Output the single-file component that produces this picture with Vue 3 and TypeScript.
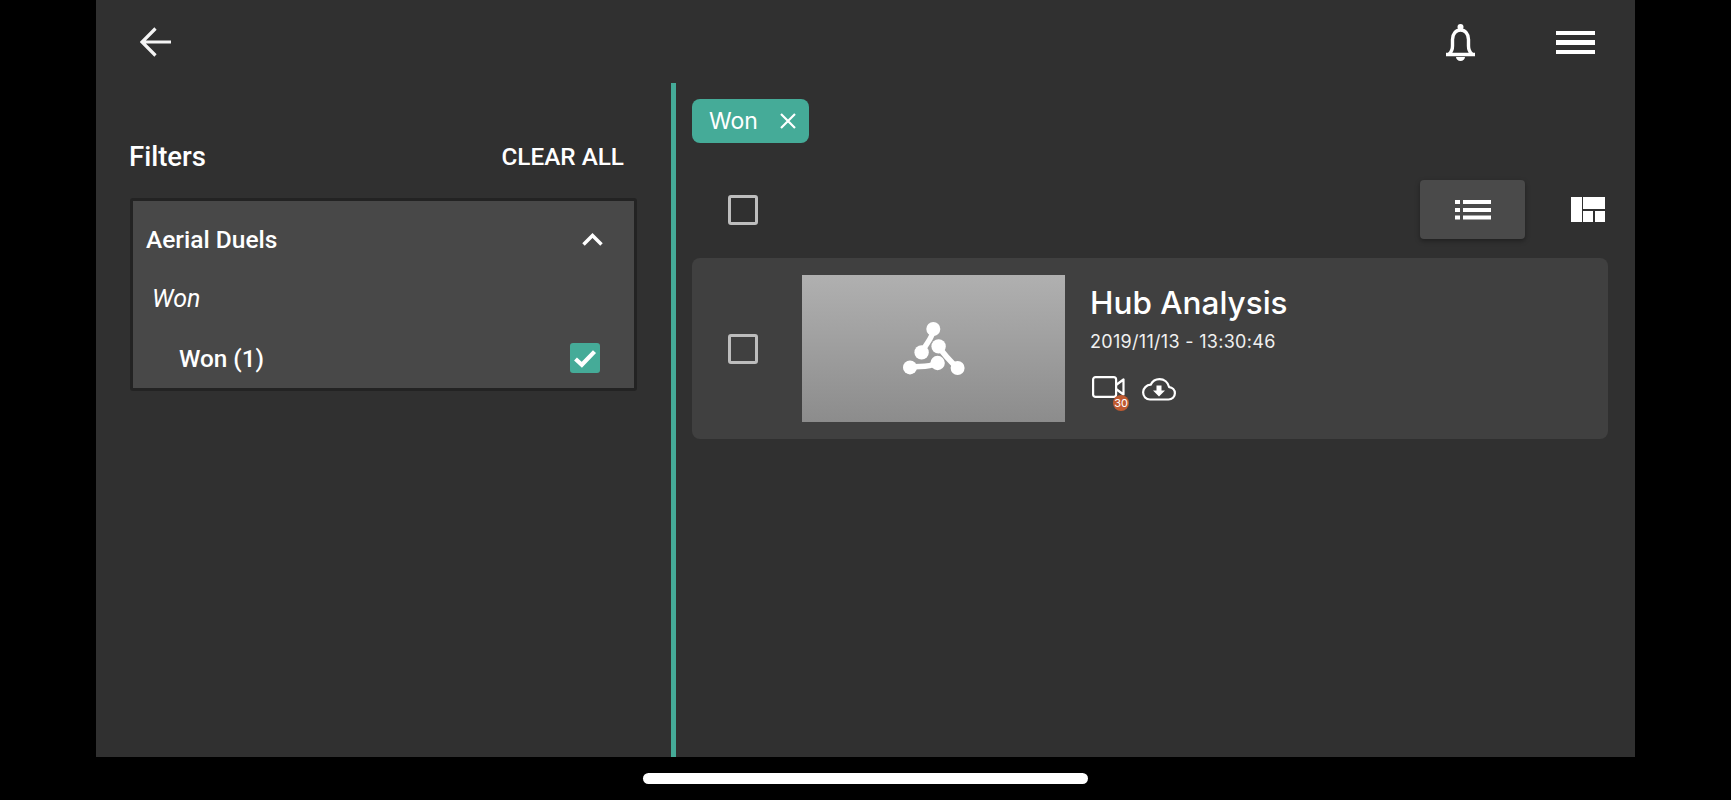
<script setup lang="ts">
import { ref } from 'vue'

interface ClipItem {
  title: string
  date: string
  clips: number
}

const filterTag = ref('Won')
const items = ref<ClipItem[]>([
  { title: 'Hub Analysis', date: '2019/11/13 - 13:30:46', clips: 30 }
])
</script>

<template>
  <div class="screen">
    <div class="panel">
      <header class="topbar">
        <svg class="back" width="31" height="30" viewBox="0 0 31 30" fill="none" stroke="#f4f4f4" stroke-width="3.200">
          <path d="M31 15H2M15.500 1.500 2 15l13.500 13.500" />
        </svg>
        <div class="topbar-right">
          <svg width="31" height="37" viewBox="0 0 31 37" fill="none" stroke="#fff" stroke-width="3.400">
            <path d="M1 30.500h29M4 30c2.500-2 3.500-4 3.500-8v-6.500c0-5.500 3.500-9.500 8-9.500s8 4 8 9.500V22c0 4 1 6 3.500 8" stroke-linejoin="round" />
            <circle cx="15.500" cy="3" r="3" fill="#fff" stroke="none" />
            <path d="M11 33h9c0 2.300-2 4-4.500 4S11 35.300 11 33z" fill="#fff" stroke="none" />
          </svg>
          <div class="burger"><span></span><span></span><span></span></div>
        </div>
      </header>

      <div class="content">
        <aside class="sidebar">
          <div class="filters-head">
            <span class="filters-title">Filters</span>
            <span class="clear">CLEAR ALL</span>
          </div>
          <section class="filter-box">
            <div class="box-row box-head">
              <span>Aerial Duels</span>
              <svg width="21" height="13" viewBox="0 0 21 13" fill="none" stroke="#fff" stroke-width="3.500">
                <path d="M1.500 11.500 10.500 2.500l9 9" />
              </svg>
            </div>
            <div class="box-group">Won</div>
            <div class="box-row box-option">
              <span>Won (1)</span>
              <span class="checked">
                <svg width="24" height="19" viewBox="0 0 22 18" fill="none" stroke="#fff" stroke-width="4">
                  <path d="M2 9.500 8 15 20 2.500" />
                </svg>
              </span>
            </div>
          </section>
        </aside>

        <main class="main">
          <div class="chip">
            <span>{{ filterTag }}</span>
            <svg width="16" height="16" viewBox="0 0 16 16" stroke="#fff" stroke-width="2.200">
              <path d="M1 1l14 14M15 1 1 15" />
            </svg>
          </div>

          <div class="toolbar">
            <span class="checkbox"></span>
            <div class="views">
              <button class="view-btn">
                <svg width="36" height="21" viewBox="0 0 36 21" fill="#fff">
                  <rect x="0" y="1" width="5" height="4" />
                  <rect x="8" y="1" width="28" height="4" />
                  <rect x="0" y="9" width="5" height="4" />
                  <rect x="8" y="9" width="28" height="4" />
                  <rect x="0" y="16.500" width="5" height="4" />
                  <rect x="8" y="16.500" width="28" height="4" />
                </svg>
              </button>
              <svg width="34" height="25" viewBox="0 0 34 25" fill="#fff">
                <rect x="0" y="0" width="11" height="25" />
                <rect x="12" y="0" width="22" height="12" />
                <rect x="12" y="14" width="10" height="11" />
                <rect x="24" y="14" width="10" height="11" />
              </svg>
            </div>
          </div>

          <article v-for="item in items" :key="item.title" class="card">
            <span class="checkbox"></span>
            <div class="thumb">
              <svg width="62" height="53" viewBox="0 0 62 53" fill="#fff" stroke="#fff">
                <path d="M30.300 7C30 16 24 20 18.600 30.400M35.600 24.400C42 34 48 40 54.600 46M7 45.400c10-2 16 1 27.600-4.400" fill="none" stroke-width="5.500" />
                <g stroke="none">
                  <circle cx="30.300" cy="7" r="7" />
                  <circle cx="18.600" cy="30.400" r="7.200" />
                  <circle cx="35.600" cy="24.400" r="7.200" />
                  <circle cx="7" cy="45.400" r="7" />
                  <circle cx="34.600" cy="41" r="7.200" />
                  <circle cx="54.600" cy="46" r="7" />
                </g>
              </svg>
            </div>
            <div class="info">
              <h2 class="title">{{ item.title }}</h2>
              <div class="date">{{ item.date }}</div>
              <div class="icons">
                <div class="video">
                  <svg width="33" height="22" viewBox="0 0 33 22" fill="none" stroke="#fff" stroke-width="2.200">
                    <rect x="1.100" y="1.100" width="23" height="19.800" rx="2.500" />
                    <path d="M24 9l7.500-5.500v15L24 13" stroke-linejoin="round" />
                  </svg>
                  <span class="badge">{{ item.clips }}</span>
                </div>
                <svg class="cloud" width="34" height="23" viewBox="0 0 34 23" fill="none" stroke="#fff" stroke-width="2.200">
                  <path d="M8 21.500h18.500c3.500 0 6.400-2.700 6.400-6.200 0-3.300-2.500-5.800-5.700-6.100C26 4.500 22.200 1.200 17.500 1.200c-4 0-7.200 2.200-8.800 5.500C4.500 7 1.100 10.300 1.100 14.300c0 4 3 7.200 6.900 7.200z" stroke-linejoin="round" />
                  <path d="M14.500 7.500h5v5h3.500L17 18.500l-6-6h3.500z" fill="#fff" stroke="none" />
                </svg>
              </div>
            </div>
          </article>
        </main>
      </div>
    </div>
    <div class="home-area"><div class="home-bar"></div></div>
  </div>
</template>

<style>
html,
body {
  margin: 0;
  background: #000;
}
</style>

<style scoped>
.screen {
  width: 1731px;
  height: 800px;
  background: #000;
  display: flex;
  flex-direction: column;
  overflow: hidden;
  font-family: Roboto, "Liberation Sans", sans-serif;
  color: #fff;
}

.panel {
  width: 1539px;
  height: 757px;
  margin-left: 96px;
  background: #303030;
  display: flex;
  flex-direction: column;
}

.topbar {
  height: 83px;
  box-sizing: border-box;
  flex: none;
  display: flex;
  align-items: center;
  justify-content: space-between;
  padding: 2px 40px 0 44px;
}

.back {
  margin-top: -2px;
  filter: blur(0.4px);
}

.topbar-right {
  display: flex;
  align-items: center;
  gap: 80px;
}

.burger {
  width: 39px;
  display: flex;
  flex-direction: column;
  gap: 5px;
}

.burger span {
  display: block;
  height: 4.500px;
  background: #fff;
}

.content {
  flex: 1;
  display: flex;
  min-height: 0;
}

.sidebar {
  width: 575px;
  box-sizing: border-box;
  flex: none;
  padding: 58px 34px 0;
}

.filters-head {
  display: flex;
  justify-content: space-between;
  align-items: center;
  height: 30px;
  padding-right: 13px;
  margin-bottom: 27px;
}

.filters-title {
  font-size: 27.500px;
  font-weight: 500;
  margin-left: -1px;
  padding-top: 1px;
}

.clear {
  font-size: 24.300px;
  font-weight: 500;
}

.filter-box {
  box-sizing: border-box;
  height: 193px;
  border: 3px solid #232323;
  border-radius: 3px;
  background: #484848;
  padding: 0 31px 0 13px;
}

.box-row {
  display: flex;
  align-items: center;
  justify-content: space-between;
}

.box-head {
  height: 77px;
  font-size: 24.500px;
  font-weight: 500;
}

.box-group {
  height: 41px;
  line-height: 41px;
  margin-bottom: 10px;
  font-size: 25px;
  font-style: italic;
  font-weight: 400;
  padding-left: 6px;
}

.box-option {
  height: 58px;
  font-size: 24.300px;
  font-weight: 500;
  padding-left: 33px;
  margin-right: 3px;
}

.checked {
  width: 30px;
  height: 30px;
  border-radius: 3px;
  background: #45ab98;
  display: flex;
  align-items: center;
  justify-content: center;
}

.main {
  flex: 1;
  min-width: 0;
  border-left: 5px solid #45ab98;
  padding: 16px 27px 0 16px;
  font-family: Inter, "Liberation Sans", sans-serif;
}

.chip {
  width: 117px;
  height: 44px;
  box-sizing: border-box;
  border-radius: 8px;
  background: #45ab98;
  display: flex;
  align-items: center;
  justify-content: space-between;
  padding: 0 13px 0 17px;
  font-size: 23px;
}

.toolbar {
  display: flex;
  align-items: center;
  justify-content: space-between;
  height: 59px;
  margin-top: 37px;
  margin-bottom: 19px;
  padding: 0 3px 0 36px;
}

.views {
  display: flex;
  align-items: center;
  gap: 46px;
}

.view-btn {
  width: 105px;
  height: 59px;
  border: none;
  border-radius: 4px;
  background: #4a4a4a;
  box-shadow: 0 2px 5px rgba(0, 0, 0, 0.35);
  display: flex;
  align-items: center;
  justify-content: center;
  padding: 0;
}

.checkbox {
  display: block;
  flex: none;
  width: 30px;
  height: 30px;
  box-sizing: border-box;
  border: 3px solid #bdbdbd;
  border-radius: 3px;
}

.card {
  height: 181px;
  box-sizing: border-box;
  border-radius: 8px;
  background: #404040;
  display: flex;
  align-items: center;
  padding-left: 36px;
}

.thumb {
  width: 263px;
  height: 147px;
  margin-left: 44px;
  flex: none;
  background: linear-gradient(#b0b0b0, #8c8c8c);
  display: flex;
  align-items: center;
  justify-content: center;
}

.info {
  margin-left: 25px;
  margin-top: -13px;
}

.title {
  margin: 0;
  font-size: 31.500px;
  font-weight: 500;
  line-height: 40px;
}

.date {
  font-size: 18px;
  line-height: 24px;
  margin-top: 7px;
  letter-spacing: 0.3px;
  color: #f0f0f0;
}

.icons {
  display: flex;
  align-items: flex-start;
  gap: 17px;
  margin-top: 22px;
  padding-left: 2px;
}

.video {
  position: relative;
  height: 22px;
}

.video svg {
  display: block;
}

.cloud {
  margin-top: 2px;
}

.badge {
  position: absolute;
  right: -4px;
  bottom: -13px;
  width: 16px;
  height: 16px;
  border-radius: 50%;
  background: #c05a30;
  font-size: 11px;
  line-height: 16px;
  text-align: center;
}

.home-area {
  flex: 1;
  display: flex;
  justify-content: center;
  padding-top: 16px;
}

.home-bar {
  width: 445px;
  height: 11px;
  border-radius: 6px;
  background: #fff;
}
</style>
